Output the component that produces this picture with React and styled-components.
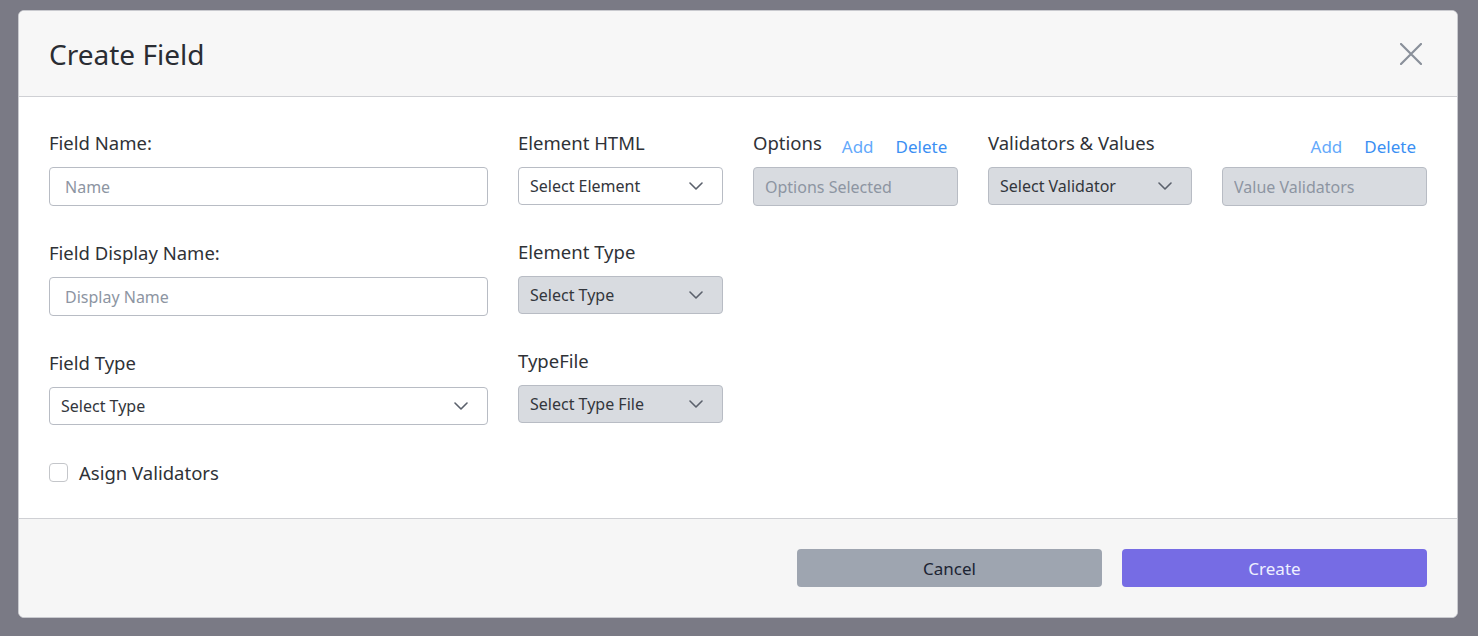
import styled, { createGlobalStyle } from "styled-components";

const GlobalStyle = createGlobalStyle`
  html, body {
    margin: 0;
    padding: 0;
    background: #7a7a85;
    font-family: "Noto Sans", "Open Sans", sans-serif;
  }
  * {
    box-sizing: border-box;
  }
`;

function Chevron() {
  return (
    <svg width="14" height="8" viewBox="0 0 14 8" fill="none">
      <path d="M1 1l6 6 6-6" stroke="#5b616c" strokeWidth="1.6" strokeLinecap="round" strokeLinejoin="round" />
    </svg>
  );
}

function CloseIcon() {
  return (
    <svg width="22" height="22" viewBox="0 0 22 22" fill="none">
      <path d="M1 1l20 20M21 1L1 21" stroke="#8a909a" strokeWidth="2.2" strokeLinecap="round" />
    </svg>
  );
}

function SelectBox({ text, disabled }) {
  return (
    <Select disabled={disabled}>
      <span>{text}</span>
      <Chevron />
    </Select>
  );
}

export default function App() {
  return (
    <Page>
      <GlobalStyle />
      <Modal>
        <Header>
          <Title>Create Field</Title>
          <CloseButton aria-label="close">
            <CloseIcon />
          </CloseButton>
        </Header>
        <Body>
          <Column width="439px">
            <Field>
              <Label>Field Name:</Label>
              <Input placeholder="Name" />
            </Field>
            <Field>
              <Label>Field Display Name:</Label>
              <Input placeholder="Display Name" />
            </Field>
            <Field>
              <Label>Field Type</Label>
              <SelectBox text="Select Type" />
            </Field>
            <CheckRow>
              <Checkbox />
              <span>Asign Validators</span>
            </CheckRow>
          </Column>
          <Column width="205px">
            <Field>
              <Label>Element HTML</Label>
              <SelectBox text="Select Element" />
            </Field>
            <Field>
              <Label>Element Type</Label>
              <SelectBox text="Select Type" disabled />
            </Field>
            <Field>
              <Label>TypeFile</Label>
              <SelectBox text="Select Type File" disabled />
            </Field>
          </Column>
          <Column width="205px">
            <Field>
              <LabelRow>
                <Label>Options</Label>
                <Actions>
                  <LinkButton light>Add</LinkButton>
                  <LinkButton>Delete</LinkButton>
                </Actions>
              </LabelRow>
              <Input placeholder="Options Selected" disabled />
            </Field>
          </Column>
          <Column width="439px">
            <Field>
              <LabelRow spread>
                <Label>Validators &amp; Values</Label>
                <Actions>
                  <LinkButton light>Add</LinkButton>
                  <LinkButton>Delete</LinkButton>
                </Actions>
              </LabelRow>
              <Pair>
                <SelectBox text="Select Validator" disabled />
                <Input placeholder="Value Validators" disabled />
              </Pair>
            </Field>
          </Column>
        </Body>
        <Footer>
          <Button variant="secondary">Cancel</Button>
          <Button variant="primary">Create</Button>
        </Footer>
      </Modal>
    </Page>
  );
}

const Page = styled.div`
  height: 636px;
  padding: 10px 20px 0 18px;
`;

const Modal = styled.div`
  width: 1440px;
  background: #fff;
  border: 1px solid #c9cacf;
  border-radius: 6px;
  overflow: hidden;
`;

const Header = styled.div`
  display: flex;
  align-items: center;
  justify-content: space-between;
  height: 86px;
  padding: 0 30px;
  background: #f7f7f7;
  border-bottom: 1px solid #cfd0d4;
`;

const Title = styled.h1`
  margin: 0;
  font-size: 28px;
  font-weight: 400;
  color: #2a2d33;
`;

const CloseButton = styled.button`
  display: flex;
  padding: 0;
  margin-right: 5px;
  border: none;
  background: none;
  cursor: pointer;
`;

const Body = styled.div`
  display: flex;
  gap: 30px;
  padding: 34px 30px 34px;
`;

const Column = styled.div`
  display: flex;
  flex-direction: column;
  gap: 35px;
  width: ${(p) => p.width};
`;

const Field = styled.div`
  display: flex;
  flex-direction: column;
  gap: 12px;
`;

const Label = styled.label`
  font-size: 18.5px;
  line-height: 24px;
  color: #2f3237;
`;

const LabelRow = styled.div`
  display: flex;
  align-items: center;
  justify-content: ${(p) => (p.spread ? "space-between" : "flex-start")};
  gap: 20px;
  height: 24px;
`;

const Actions = styled.div`
  display: flex;
  gap: 22px;
  margin-top: 6px;
  margin-right: 11px;
`;

const LinkButton = styled.button`
  padding: 0;
  border: none;
  background: none;
  font-family: inherit;
  font-size: 17px;
  color: ${(p) => (p.light ? "#64a9fb" : "#3b8ff3")};
  cursor: pointer;
`;

const Input = styled.input`
  width: 100%;
  height: 39px;
  padding: 0 15px;
  border: 1px solid #b8bcc4;
  border-radius: 4px;
  font-family: inherit;
  font-size: 16px;
  color: #333;
  background: ${(p) => (p.disabled ? "#d8dbe0" : "#fff")};
  &::placeholder {
    color: #8d95a2;
  }
  &:disabled {
    padding: 0 11px;
  }
`;

const Select = styled.div`
  display: flex;
  align-items: center;
  justify-content: space-between;
  height: 38px;
  padding: 0 19px 0 11px;
  border: 1px solid #b8bcc4;
  border-radius: 4px;
  font-size: 16px;
  color: #33363c;
  background: ${(p) => (p.disabled ? "#d8dbe0" : "#fff")};
`;

const Pair = styled.div`
  display: grid;
  grid-template-columns: 204px 205px;
  gap: 30px;
`;

const CheckRow = styled.label`
  display: flex;
  align-items: center;
  gap: 11px;
  height: 24px;
  font-size: 18.5px;
  color: #2f3237;
`;

const Checkbox = styled.span`
  width: 19px;
  height: 19px;
  border: 1px solid #c4c6ca;
  border-radius: 4px;
  background: #fff;
`;

const Footer = styled.div`
  display: flex;
  justify-content: flex-end;
  gap: 20px;
  padding: 30px 30px;
  background: #f6f6f6;
  border-top: 1px solid #cfd0d4;
`;

const Button = styled.button`
  width: 305px;
  height: 38px;
  border: none;
  border-radius: 4px;
  font-family: inherit;
  font-size: 17px;
  cursor: pointer;
  background: ${(p) => (p.variant === "primary" ? "#766ce4" : "#9ea5b0")};
  color: ${(p) => (p.variant === "primary" ? "#eef0ff" : "#1c2433")};
`;
